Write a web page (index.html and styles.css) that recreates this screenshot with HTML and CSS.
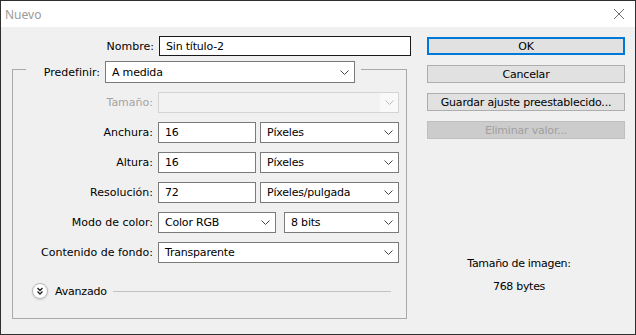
FILE: index.html
```html
<!DOCTYPE html>
<html lang="es">
<head>
  <meta charset="UTF-8">
  <title>Nuevo</title>
  <link rel="stylesheet" href="styles.css">
</head>
<body>

  <div class="window">
    <!-- Title bar -->
    <div class="titlebar">
      <span class="title">Nuevo</span>
      <svg class="close" width="12" height="12" viewBox="0 0 12 12">
        <path d="M1 1 L11 11 M11 1 L1 11" stroke="#6f6f6f" stroke-width="1" fill="none"/>
      </svg>
    </div>

    <div class="content">
      <!-- Form -->
      <div class="form">
        <div class="name-row">
          <label>Nombre:</label>
          <div class="field name">Sin título-2</div>
        </div>

        <fieldset class="preset">
          <legend>
            <label>Predefinir:</label>
            <div class="select preset-select">
              <span>A medida</span>
              <svg width="9" height="5" viewBox="0 0 9 5"><path d="M0.5 0.5 L4.5 4.5 L8.5 0.5" stroke="#444" fill="none"/></svg>
            </div>
          </legend>

          <div class="grid">
            <label class="disabled">Tamaño:</label>
            <div class="select off">
              <span></span>
              <i class="arrow-box"><svg width="9" height="5" viewBox="0 0 9 5"><path d="M0.5 0.5 L4.5 4.5 L8.5 0.5" stroke="#bdbdbd" fill="none"/></svg></i>
            </div>

            <label>Anchura:</label>
            <div class="pair">
              <div class="field num">16</div>
              <div class="select unit">
                <span>Píxeles</span>
                <svg width="9" height="5" viewBox="0 0 9 5"><path d="M0.5 0.5 L4.5 4.5 L8.5 0.5" stroke="#444" fill="none"/></svg>
              </div>
            </div>

            <label>Altura:</label>
            <div class="pair">
              <div class="field num">16</div>
              <div class="select unit">
                <span>Píxeles</span>
                <svg width="9" height="5" viewBox="0 0 9 5"><path d="M0.5 0.5 L4.5 4.5 L8.5 0.5" stroke="#444" fill="none"/></svg>
              </div>
            </div>

            <label>Resolución:</label>
            <div class="pair">
              <div class="field num">72</div>
              <div class="select unit">
                <span>Píxeles/pulgada</span>
                <svg width="9" height="5" viewBox="0 0 9 5"><path d="M0.5 0.5 L4.5 4.5 L8.5 0.5" stroke="#444" fill="none"/></svg>
              </div>
            </div>

            <label>Modo de color:</label>
            <div class="pair mode">
              <div class="select color-mode">
                <span>Color RGB</span>
                <svg width="9" height="5" viewBox="0 0 9 5"><path d="M0.5 0.5 L4.5 4.5 L8.5 0.5" stroke="#444" fill="none"/></svg>
              </div>
              <div class="select bits">
                <span>8 bits</span>
                <svg width="9" height="5" viewBox="0 0 9 5"><path d="M0.5 0.5 L4.5 4.5 L8.5 0.5" stroke="#444" fill="none"/></svg>
              </div>
            </div>

            <label>Contenido de fondo:</label>
            <div class="select">
              <span>Transparente</span>
              <svg width="9" height="5" viewBox="0 0 9 5"><path d="M0.5 0.5 L4.5 4.5 L8.5 0.5" stroke="#444" fill="none"/></svg>
            </div>
          </div>

          <div class="advanced">
            <span class="toggle">
              <svg width="16" height="16" viewBox="0 0 16 16">
                <circle cx="8" cy="8" r="7.5" fill="#fff" stroke="#b5b5b5"/>
                <path d="M5.5 5 L8 7.5 L10.5 5 M5.5 8.5 L8 11 L10.5 8.5" stroke="#222" stroke-width="1.3" fill="none"/>
              </svg>
            </span>
            <span class="adv-label">Avanzado</span>
            <span class="rule"></span>
          </div>
        </fieldset>
      </div>

      <!-- Buttons and info -->
      <div class="side">
        <button class="btn default">OK</button>
        <button class="btn">Cancelar</button>
        <button class="btn">Guardar ajuste preestablecido...</button>
        <button class="btn" disabled>Eliminar valor...</button>

        <div class="info">
          <p>Tamaño de imagen:</p>
          <p>768 bytes</p>
        </div>
      </div>
    </div>
  </div>

</body>
</html>
```

FILE: styles.css
```css
* {
  margin: 0;
  padding: 0;
  box-sizing: border-box;
}

body {
  font-family: 'DejaVu Sans', Tahoma, sans-serif;
  font-size: 11px;
  color: #000;
  background-color: #f0f0f0;
}

.window {
  width: 636px;
  height: 335px;
  border: 1px solid #2f2f2f;
  background-color: #f0f0f0;
  display: flex;
  flex-direction: column;
}

/* Title bar */
.titlebar {
  height: 26px;
  background-color: #fff;
  display: flex;
  align-items: center;
  justify-content: space-between;
  padding: 0 10px 0 4px;
}

.title {
  font-family: 'Noto Sans', sans-serif;
  font-size: 12px;
  color: #9a9a9a;
}

.content {
  flex: 1;
  display: flex;
}

/* Left form */
.form {
  width: 410px;
  padding-left: 11px;
}

.name-row {
  display: flex;
  align-items: center;
  margin-top: 9px;
  height: 20px;
}

.name-row label {
  width: 142px;
  text-align: right;
  margin-right: 5px;
}

.field {
  height: 21px;
  background-color: #fff;
  border: 1px solid #7a7a7a;
  padding: 0 6px;
  display: flex;
  align-items: center;
  letter-spacing: -0.2px;
}

.field.name {
  width: 252px;
  height: 20px;
  border-color: #1a1a1a;
}

.field.num {
  width: 98px;
}

.select {
  height: 21px;
  background-color: #fff;
  border: 1px solid #7a7a7a;
  display: flex;
  align-items: center;
  justify-content: space-between;
  padding: 0 5px 0 6px;
  letter-spacing: -0.2px;
}

.select svg {
  flex-shrink: 0;
}

.select.off {
  background-color: #f2f2f2;
  border-color: #d4d4d4;
  padding: 0;
}

.arrow-box {
  width: 18px;
  height: 19px;
  background-color: #f9f9f9;
  display: flex;
  align-items: center;
  justify-content: center;
}

/* Group box */
.preset {
  width: 395px;
  margin-top: -1px;
  border: 1px solid #a9a9a9;
  padding: 0 7px 19px 0;
}

.preset legend {
  display: flex;
  align-items: center;
  margin-left: 13px;
  padding: 6px 6px 0 0;
}

.preset legend label {
  width: 74px;
  text-align: right;
  margin-right: 5px;
}

.preset-select {
  width: 250px;
  height: 22px;
}

.grid {
  display: grid;
  grid-template-columns: 140px 1fr;
  column-gap: 5px;
  row-gap: 9px;
  grid-auto-rows: 21px;
  margin-top: 9px;
}

.grid label {
  text-align: right;
  align-self: center;
}

.grid label.disabled {
  color: #a3a3a3;
}

.pair {
  display: flex;
  gap: 4px;
}

.pair .unit {
  flex: 1;
}

.pair.mode {
  gap: 8px;
}

.color-mode {
  width: 118px;
}

.bits {
  flex: 1;
}

/* Advanced toggle */
.advanced {
  display: flex;
  align-items: center;
  height: 16px;
  margin-top: 20px;
  padding-left: 19px;
  padding-right: 8px;
}

.toggle {
  width: 16px;
  height: 16px;
  display: flex;
  border-radius: 50%;
  box-shadow: 0 1px 2px rgba(0, 0, 0, 0.15);
}

.adv-label {
  margin-left: 7px;
  letter-spacing: -0.2px;
}

.rule {
  flex: 1;
  height: 1px;
  margin-left: 6px;
  background-color: #c2c2c2;
}

/* Right column */
.side {
  width: 214px;
  padding-left: 16px;
  padding-top: 10px;
  display: flex;
  flex-direction: column;
}

.btn {
  width: 198px;
  height: 18px;
  margin-bottom: 10px;
  border: 1px solid #adadad;
  background-color: #e1e1e1;
  font-family: inherit;
  font-size: 11px;
  letter-spacing: -0.2px;
  color: #000;
}

.btn.default {
  border: 2px solid #0078d7;
}

.btn:disabled {
  border-color: #bfbfbf;
  background-color: #cccccc;
  color: #a0a0a0;
}

.info {
  margin-top: 103px;
  text-align: center;
  padding-right: 14px;
}

.info p {
  line-height: 23px;
  letter-spacing: -0.3px;
}
```
